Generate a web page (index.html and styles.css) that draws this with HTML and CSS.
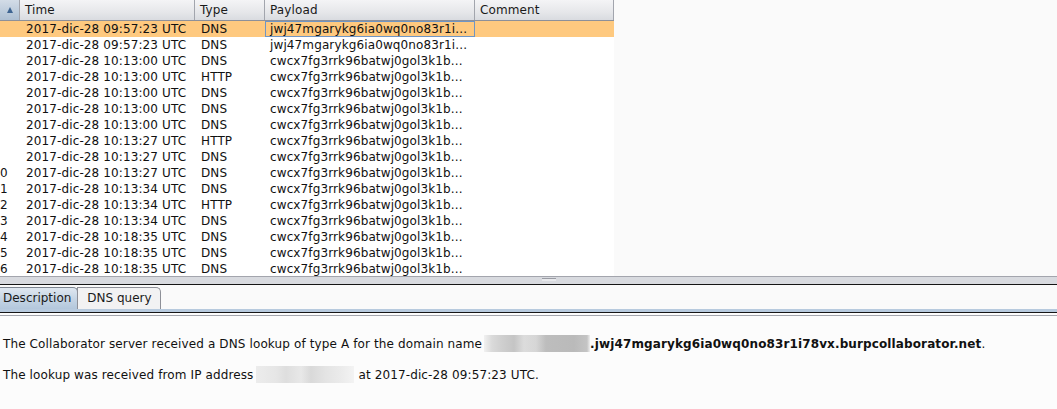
FILE: index.html
```html
<!DOCTYPE html>
<html>
<head>
<meta charset="utf-8">
<link rel="stylesheet" href="styles.css">
</head>
<body>
<div class="app">
  <div class="table-pane">
    <div class="table">
      <div class="thead">
        <div class="th th-sort"><span class="arrow"></span></div>
        <div class="th">Time</div>
        <div class="th">Type</div>
        <div class="th th-pay">Payload</div>
        <div class="th">Comment</div>
      </div>
      <div class="tr selected"><div class="td num"></div><div class="td">2017-dic-28 09:57:23 UTC</div><div class="td">DNS</div><div class="td pay focus">jwj47mgarykg6ia0wq0no83r1i...</div><div class="td"></div></div>
      <div class="tr"><div class="td num"></div><div class="td">2017-dic-28 09:57:23 UTC</div><div class="td">DNS</div><div class="td pay">jwj47mgarykg6ia0wq0no83r1i...</div><div class="td"></div></div>
      <div class="tr"><div class="td num"></div><div class="td">2017-dic-28 10:13:00 UTC</div><div class="td">DNS</div><div class="td pay">cwcx7fg3rrk96batwj0gol3k1b...</div><div class="td"></div></div>
      <div class="tr"><div class="td num"></div><div class="td">2017-dic-28 10:13:00 UTC</div><div class="td">HTTP</div><div class="td pay">cwcx7fg3rrk96batwj0gol3k1b...</div><div class="td"></div></div>
      <div class="tr"><div class="td num"></div><div class="td">2017-dic-28 10:13:00 UTC</div><div class="td">DNS</div><div class="td pay">cwcx7fg3rrk96batwj0gol3k1b...</div><div class="td"></div></div>
      <div class="tr"><div class="td num"></div><div class="td">2017-dic-28 10:13:00 UTC</div><div class="td">DNS</div><div class="td pay">cwcx7fg3rrk96batwj0gol3k1b...</div><div class="td"></div></div>
      <div class="tr"><div class="td num"></div><div class="td">2017-dic-28 10:13:00 UTC</div><div class="td">DNS</div><div class="td pay">cwcx7fg3rrk96batwj0gol3k1b...</div><div class="td"></div></div>
      <div class="tr"><div class="td num"></div><div class="td">2017-dic-28 10:13:27 UTC</div><div class="td">HTTP</div><div class="td pay">cwcx7fg3rrk96batwj0gol3k1b...</div><div class="td"></div></div>
      <div class="tr"><div class="td num"></div><div class="td">2017-dic-28 10:13:27 UTC</div><div class="td">DNS</div><div class="td pay">cwcx7fg3rrk96batwj0gol3k1b...</div><div class="td"></div></div>
      <div class="tr"><div class="td num">0</div><div class="td">2017-dic-28 10:13:27 UTC</div><div class="td">DNS</div><div class="td pay">cwcx7fg3rrk96batwj0gol3k1b...</div><div class="td"></div></div>
      <div class="tr"><div class="td num">1</div><div class="td">2017-dic-28 10:13:34 UTC</div><div class="td">DNS</div><div class="td pay">cwcx7fg3rrk96batwj0gol3k1b...</div><div class="td"></div></div>
      <div class="tr"><div class="td num">2</div><div class="td">2017-dic-28 10:13:34 UTC</div><div class="td">HTTP</div><div class="td pay">cwcx7fg3rrk96batwj0gol3k1b...</div><div class="td"></div></div>
      <div class="tr"><div class="td num">3</div><div class="td">2017-dic-28 10:13:34 UTC</div><div class="td">DNS</div><div class="td pay">cwcx7fg3rrk96batwj0gol3k1b...</div><div class="td"></div></div>
      <div class="tr"><div class="td num">4</div><div class="td">2017-dic-28 10:18:35 UTC</div><div class="td">DNS</div><div class="td pay">cwcx7fg3rrk96batwj0gol3k1b...</div><div class="td"></div></div>
      <div class="tr"><div class="td num">5</div><div class="td">2017-dic-28 10:18:35 UTC</div><div class="td">DNS</div><div class="td pay">cwcx7fg3rrk96batwj0gol3k1b...</div><div class="td"></div></div>
      <div class="tr"><div class="td num">6</div><div class="td">2017-dic-28 10:18:35 UTC</div><div class="td">DNS</div><div class="td pay">cwcx7fg3rrk96batwj0gol3k1b...</div><div class="td"></div></div>
    </div>
  </div>
  <div class="splitter"><div class="grip"></div></div>
  <div class="tabs">
    <div class="tab active">Description</div>
    <div class="tab">DNS query</div>
  </div>
  <div class="tab-band"></div>
  <div class="tab-gap"></div>
  <div class="content">
    <p>The Collaborator server received a DNS lookup of type A for the domain name<span class="blur blur-a"></span><b>.jwj47mgarykg6ia0wq0no83r1i78vx.burpcollaborator.net</b>.</p>
    <p>The lookup was received from IP address<span class="blur blur-b"></span>at 2017-dic-28 09:57:23 UTC.</p>
  </div>
</div>
</body>
</html>
```

FILE: styles.css
```css
html, body {
  margin: 0;
  padding: 0;
}
body {
  font-family: "DejaVu Sans", sans-serif;
  font-size: 12px;
  letter-spacing: 0.12px;
  color: #111;
  background: #fafafa;
}
.app {
  width: 1057px;
  height: 409px;
  display: flex;
  flex-direction: column;
  overflow: hidden;
}
.table-pane {
  height: 276px;
  flex: none;
  overflow: hidden;
  background: #fafafa;
  border-bottom: 1px solid #a3a5ad;
}
.table {
  width: 614px;
}
.thead, .tr {
  display: grid;
  grid-template-columns: 20px 175px 70px 210px 139px;
}
.thead {
  height: 20px;
  border-bottom: 1px solid #8d9099;
  background: linear-gradient(#f4f4f6, #e6e7ea 60%, #d9dbe0);
}
.th {
  line-height: 20px;
  padding-left: 5px;
  border-right: 1px solid #a2a5ad;
  color: #1a1a1a;
  white-space: nowrap;
  overflow: hidden;
}
.th-sort {
  padding-left: 0;
  background: linear-gradient(#d3dce7, #bccbdb 60%, #aebfd2);
  display: flex;
  align-items: center;
  justify-content: center;
}
.arrow {
  width: 0;
  height: 0;
  border-left: 3.5px solid transparent;
  border-right: 3.5px solid transparent;
  border-bottom: 6px solid #3e6491;
  margin-top: -1px;
}
.tr {
  height: 16px;
  background: #fff;
}
.tr.selected {
  background: #fec97f;
}
.td {
  line-height: 16px;
  padding-left: 6px;
  white-space: nowrap;
  overflow: hidden;
  color: #111;
}
.td.pay {
  padding-left: 5px;
}
.td.focus {
  box-shadow: inset 0 0 0 1px #6f95c4;
}
.td.num {
  padding-left: 0;
}
.splitter {
  height: 7px;
  flex: none;
  background: #d8dadf;
  border-bottom: 1px solid #151515;
  display: flex;
  align-items: center;
  padding-left: 542px;
}
.grip {
  width: 14px;
  height: 2px;
  background: #e8e9ec;
  border-top: 1px solid #9a9ca4;
  margin-top: -2px;
}
.tabs {
  height: 24px;
  flex: none;
  display: flex;
  align-items: flex-end;
  background: #fafafa;
}
.tab {
  height: 21px;
  line-height: 21px;
  padding: 0 8px 0 9px;
  border: 1px solid #8e9098;
  border-bottom: none;
  border-radius: 0 5px 0 0;
  background: #f2f2f3;
  color: #1a1a1a;
  margin-left: -1px;
  letter-spacing: 0;
}
.tab.active {
  padding: 0 6px 0 3px;
  margin-left: -1px;
  border-color: #7d8590;
  background: linear-gradient(#dfe7f0, #c4d4e4 55%, #b3c7dc);
}
.tab-band {
  height: 3px;
  flex: none;
  background: #b7cade;
  border-bottom: 1px solid #151515;
}
.tab-gap {
  height: 2px;
  flex: none;
  background: #fcfcfc;
  border-bottom: 1px solid #a3a5ad;
}
.content {
  flex: 1;
  background: #fcfcfc;
  padding: 19px 3px 0;
}
.content p {
  margin: 0 0 14px;
  line-height: 16px;
  white-space: nowrap;
}
.content b {
  font-weight: bold;
  letter-spacing: 0.12px;
}
.blur {
  display: inline-block;
  height: 17px;
  vertical-align: -4px;
}
.blur-a {
  width: 106px;
  margin-left: 2px;
  background: linear-gradient(90deg, #f1f1f1 0, #dadada 8px, #cfcfcf 18px, #c5c5c5 30px, #dcdcdc 40px, #d6d6d6 52px, #bdbdbd 62px, #bababa 90px, #c4c4c4 103px, #efefef 106px);
}
.blur-b {
  width: 98px;
  margin: 0 4px 0 3px;
  background: linear-gradient(90deg, #ececec 0, #e6e6e6 20px, #dedede 30px, #e8e8e8 45px, #d9d9d9 55px, #e4e4e4 70px, #ebebeb 85px, #f3f3f3 98px);
}
```
